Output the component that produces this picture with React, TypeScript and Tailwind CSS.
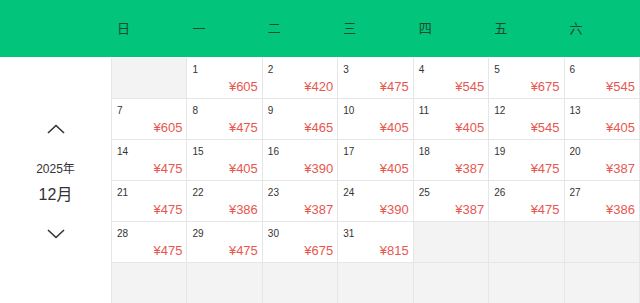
import React from "react";

const prices: Record<number, number> = {
  1: 605, 2: 420, 3: 475, 4: 545, 5: 675, 6: 545,
  7: 605, 8: 475, 9: 465, 10: 405, 11: 405, 12: 545, 13: 405,
  14: 475, 15: 405, 16: 390, 17: 405, 18: 387, 19: 475, 20: 387,
  21: 475, 22: 386, 23: 387, 24: 390, 25: 387, 26: 475, 27: 386,
  28: 475, 29: 475, 30: 675, 31: 815,
};

const weekdays = ["日", "一", "二", "三", "四", "五", "六"];

export default function App() {
  const cells: (number | null)[] = [];
  const offset = 1;
  for (let i = 0; i < 42; i++) {
    const d = i - offset + 1;
    cells.push(d >= 1 && d <= 31 ? d : null);
  }
  return (
    <div
      className="w-[640px] h-[303px] overflow-hidden bg-white"
      style={{ fontFamily: '"Liberation Sans", Arial, "Noto Sans CJK SC", sans-serif' }}
    >
      <div className="flex h-[57px] bg-[#03c47b]">
        <div className="w-[111px] shrink-0" />
        <div className="grid flex-1 grid-cols-7 items-center pl-px">
          {weekdays.map((w) => (
            <div key={w} className="pl-[5px] text-[13px] text-[#174a30]">
              {w}
            </div>
          ))}
        </div>
      </div>
      <div className="mt-px flex">
        <div className="flex w-[111px] shrink-0 flex-col items-center pt-[66px] text-[#333]">
          <svg width="18" height="10" viewBox="0 0 18 10" fill="none">
            <path d="M1 9 L9 1.5 L17 9" stroke="#333" strokeWidth="1.6" />
          </svg>
          <div className="mt-[28px] text-[12px] leading-[14px]">2025年</div>
          <div className="mt-[10px] text-[16px] leading-[18px]">12月</div>
          <div className="mt-[25px]">
            <svg width="18" height="10" viewBox="0 0 18 10" fill="none">
              <path d="M1 1 L9 8.5 L17 1" stroke="#333" strokeWidth="1.6" />
            </svg>
          </div>
        </div>
        <div className="grid flex-1 grid-cols-7 border-l border-[#e6e6e6]">
          {cells.map((d, i) =>
            d === null ? (
              <div
                key={i}
                className="h-[41px] border-b border-r border-[#e6e6e6] bg-[#f3f3f3]"
              />
            ) : (
              <div
                key={i}
                className="relative h-[41px] border-b border-r border-[#e6e6e6] bg-white"
              >
                <div className="absolute left-[5px] top-[6px] text-[10px] leading-[12px] text-[#333]">
                  {d}
                </div>
                <div className="absolute right-[4px] top-[21px] text-[13px] leading-[16px] text-[#e8574f]">
                  ¥{prices[d]}
                </div>
              </div>
            )
          )}
        </div>
      </div>
    </div>
  );
}
